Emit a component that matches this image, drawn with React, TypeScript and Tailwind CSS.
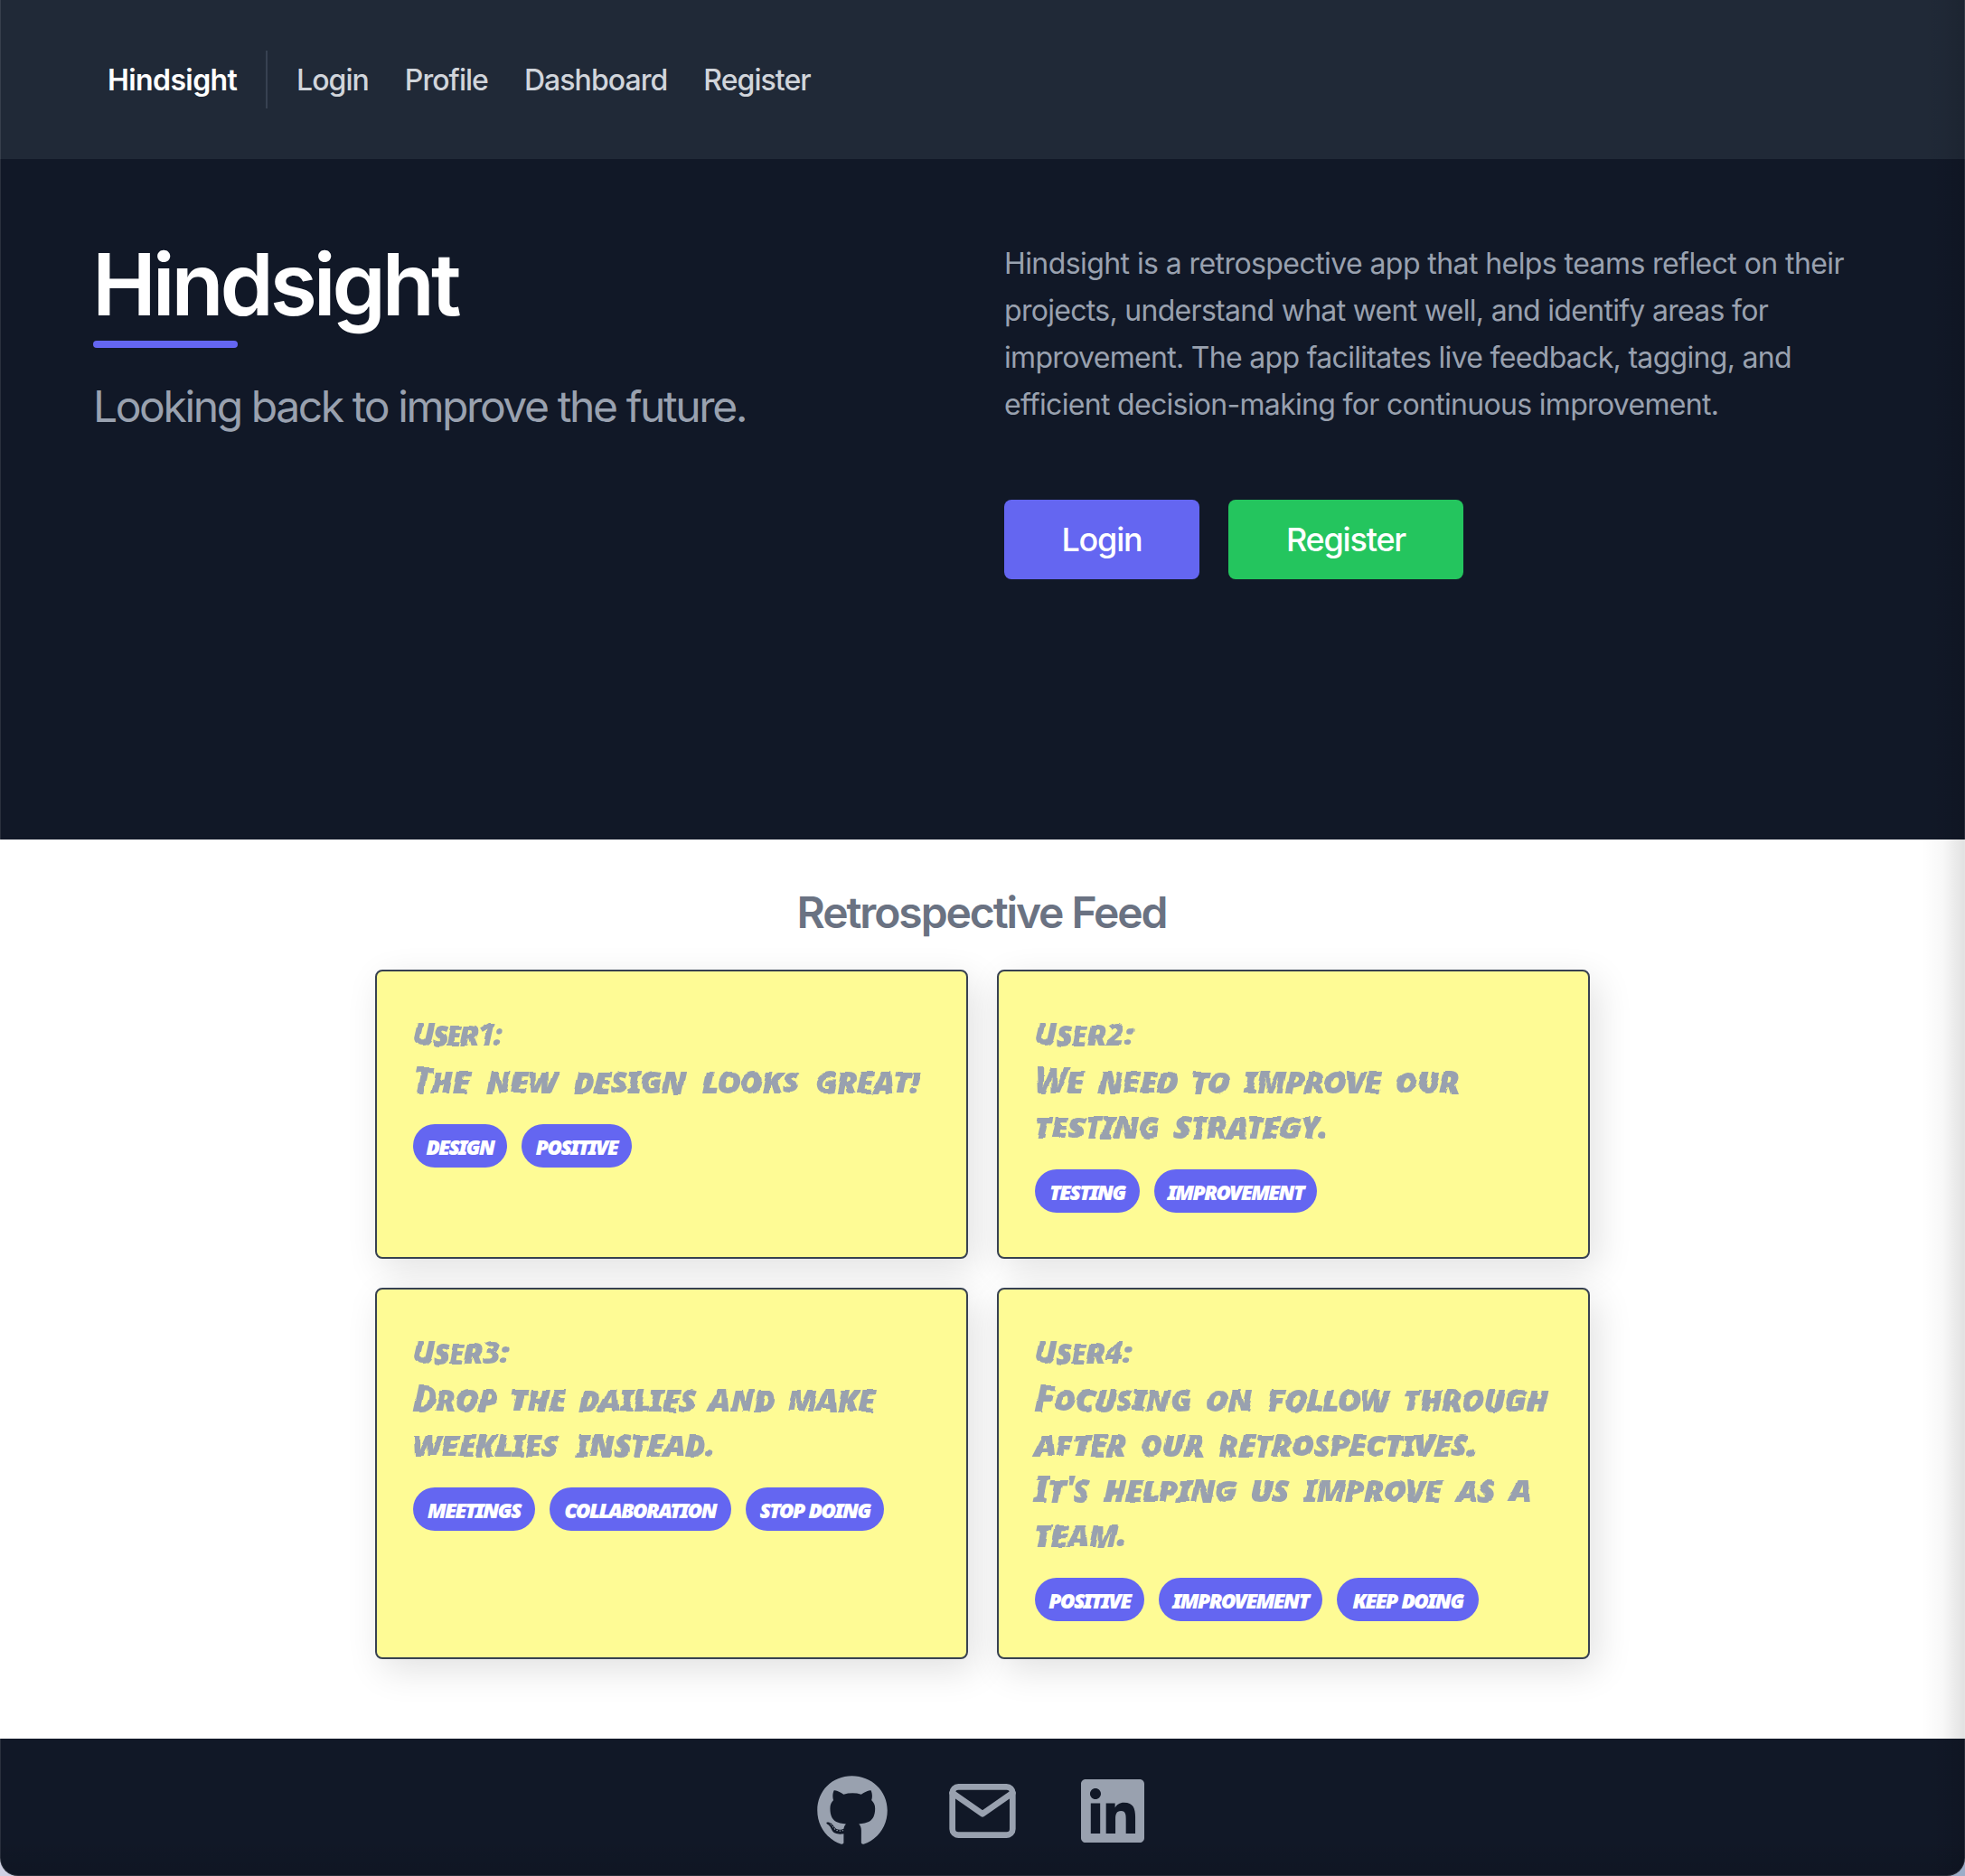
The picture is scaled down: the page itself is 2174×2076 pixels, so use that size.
import { FaGithub, FaLinkedin } from "react-icons/fa";
import { FiMail } from "react-icons/fi";

type Line = { text: string; size: string };
type Note = { user: string; userTracking: string; lines: Line[]; tags: Line[] };

const notes: Note[] = [
  {
    user: "User1:",
    userTracking: "tracking-[-2.6px]",
    lines: [{ text: "The new design looks great!", size: "w-[560px]" }],
    tags: [
      { text: "design", size: "w-[104px]" },
      { text: "positive", size: "w-[122px]" },
    ],
  },
  {
    user: "User2:",
    userTracking: "tracking-[-0.6px]",
    lines: [
      { text: "We need to improve our", size: "w-[470px]" },
      { text: "testing strategy.", size: "w-[325px]" },
    ],
    tags: [
      { text: "testing", size: "w-[116px]" },
      { text: "improvement", size: "w-[180px]" },
    ],
  },
  {
    user: "User3:",
    userTracking: "tracking-[-1.2px]",
    lines: [
      { text: "Drop the dailies and make", size: "w-[512px]" },
      { text: "weeklies instead.", size: "w-[335px]" },
    ],
    tags: [
      { text: "meetings", size: "w-[135px]" },
      { text: "collaboration", size: "w-[201px]" },
      { text: "stop doing", size: "w-[153px]" },
    ],
  },
  {
    user: "User4:",
    userTracking: "tracking-[-1px]",
    lines: [
      { text: "Focusing on follow through", size: "w-[568px]" },
      { text: "after our retrospectives.", size: "w-[490px]" },
      { text: "It's helping us improve as a", size: "w-[549px]" },
      { text: "team.", size: "w-[104px]" },
    ],
    tags: [
      { text: "positive", size: "w-[121px]" },
      { text: "improvement", size: "w-[181px]" },
      { text: "keep doing", size: "w-[157px]" },
    ],
  },
];

function NoteCard({ note }: { note: Note }) {
  return (
    <article className="min-h-[320px] rounded-lg border-2 border-[#374151] bg-[#fefb95] px-10 pb-10 pt-[41px] font-['Noto_Sans',sans-serif] font-black italic [font-variant-caps:small-caps] shadow-[8px_12px_40px_rgba(0,0,0,0.12)]">
      <div className="-ml-px text-gray-400 [filter:url(#marker)]">
        <p className={`${note.userTracking} text-[36px] leading-[56px]`}>{note.user}</p>
        <div className="-mt-0.5 text-[40px] leading-[50px] tracking-[-1.3px]">
          {note.lines.map((line) => (
            <p key={line.text} className={`${line.size} whitespace-nowrap [text-align-last:justify]`}>
              {line.text}
            </p>
          ))}
        </div>
      </div>
      <div className="mt-6 flex gap-4">
        {note.tags.map((tag) => (
          <span
            key={tag.text}
            className={`${tag.size} h-12 whitespace-nowrap rounded-full bg-[#6466f1] text-center text-[26px] leading-[48px] tracking-[-1.8px] text-white`}
          >
            {tag.text}
          </span>
        ))}
      </div>
    </article>
  );
}

export default function App() {
  return (
    <div className="h-[2076px] w-[2174px] overflow-hidden bg-gradient-to-r from-[#cfd0e3] to-[#9badc8] font-[Inter,sans-serif]">
      {/* Uneven edge of the marker lettering on the notes */}
      <svg className="absolute size-0" aria-hidden="true">
        <filter id="marker" colorInterpolationFilters="sRGB" x="-2%" y="-5%" width="104%" height="110%">
          <feTurbulence type="fractalNoise" baseFrequency="0.06" numOctaves="1" seed="4" result="noise" />
          <feDisplacementMap in="SourceGraphic" in2="noise" scale="6" xChannelSelector="R" yChannelSelector="G" />
        </filter>
      </svg>
      <div className="relative flex h-full flex-col overflow-hidden rounded-b-[20px] bg-white">
        <nav className="flex h-[176px] shrink-0 items-center bg-[#202937] pl-[119px] text-[32px]">
          <span className="w-[143px] whitespace-nowrap pt-0.5 font-semibold tracking-[-0.6px] text-white">Hindsight</span>
          <span className="ml-8 h-16 w-0.5 bg-[#374151]" />
          <div className="ml-8 flex gap-10 pt-0.5 tracking-[-0.95px] text-[#d1d5db] [font-weight:450]">
            <a>Login</a>
            <a>Profile</a>
            <a>Dashboard</a>
            <a>Register</a>
          </div>
        </nav>

        <header className="grid h-[753px] shrink-0 grid-cols-[1008px_1fr] bg-[#111827] pl-[103px]">
          <div className="pt-[91px]">
            <h1 className="-ml-px text-[95px] font-semibold leading-[96px] tracking-[-4.1px] text-white">Hindsight</h1>
            <div className="mt-[14px] h-2 w-40 rounded-full bg-[#6466f1]" />
            <p className="mt-[33px] text-[48px] leading-[64px] tracking-[-2.4px] text-gray-400">
              Looking back to improve the future.
            </p>
          </div>
          <div className="pt-[90px]">
            <p className="text-[32px] leading-[52px] text-gray-400">
              <span className="tracking-[-0.58px]">Hindsight is a retrospective app that helps teams reflect on their</span>
              <br />
              <span className="tracking-[-0.7px]">projects, understand what went well, and identify areas for</span>
              <br />
              <span className="tracking-[-0.69px]">improvement. The app facilitates live feedback, tagging, and</span>
              <br />
              <span className="tracking-[-0.69px]">efficient decision-making for continuous improvement.</span>
            </p>
            <div className="mt-[79px] flex gap-8 text-[36px] tracking-[-1.2px] text-white [font-weight:450]">
              <button className="h-[88px] w-[216px] rounded-lg bg-[#6466f1]">Login</button>
              <button className="h-[88px] w-[260px] rounded-lg bg-[#24c55e]">Register</button>
            </div>
          </div>
        </header>

        <main className="flex h-[995px] shrink-0 flex-col items-center pt-[49px]">
          <h2 className="-ml-0.5 text-[48px] font-semibold leading-[64px] tracking-[-2.1px] text-gray-500">
            Retrospective Feed
          </h2>
          <div className="mt-[31px] grid grid-cols-[656px_656px] gap-8">
            {notes.map((note) => (
              <NoteCard key={note.user} note={note} />
            ))}
          </div>
        </main>

        <footer className="flex flex-1 items-start justify-center gap-16 bg-[#111827] pt-10 text-gray-400">
          <FaGithub className="size-20" />
          <FiMail className="size-20" />
          <FaLinkedin className="size-20" />
        </footer>

        <div className="pointer-events-none absolute inset-y-0 right-0 w-12 bg-gradient-to-r from-transparent via-black/3 to-black/12" />
        <div className="pointer-events-none absolute inset-x-0 bottom-0 h-10 bg-gradient-to-b from-transparent to-black/10" />
        <div className="pointer-events-none absolute inset-0 rounded-b-[20px] border border-t-0 border-white/10" />
      </div>
    </div>
  );
}
